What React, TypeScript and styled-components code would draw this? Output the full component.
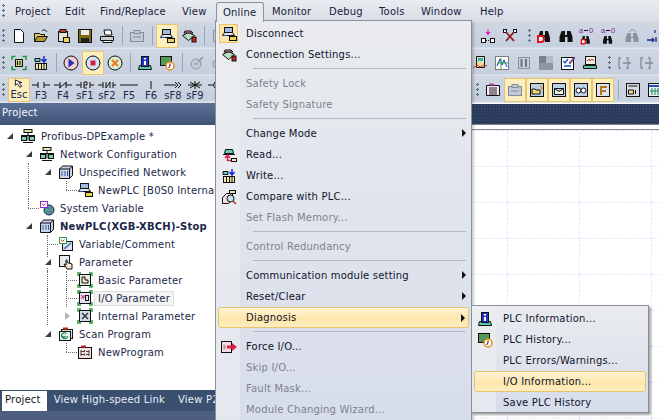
import React from "react";
import styled, { createGlobalStyle, css } from "styled-components";

const GlobalStyle = createGlobalStyle`
  html, body { margin: 0; padding: 0; width: 659px; height: 420px; overflow: hidden; background: #fff; }
  * { box-sizing: border-box; }
  body { font-family: "DejaVu Sans", Verdana, sans-serif; font-size: 10px; letter-spacing: 0.2px; color: #1a1a38; }
`;

const Window = styled.div`
  position: relative;
  width: 659px;
  height: 420px;
  overflow: hidden;
  display: flex;
  flex-direction: column;
`;

/* ---------- menu bar ---------- */
const MenuBar = styled.div`
  height: 22px;
  flex: none;
  display: flex;
  align-items: center;
  padding-left: 2px;
  background: linear-gradient(#e9ecf1, #d7dce5);
`;

const Grip = styled.i`
  flex: none;
  width: 3px;
  height: 14px;
  margin-right: 3px;
  background: radial-gradient(circle at 1.5px 1.5px, #5d6f88 1.3px, transparent 1.4px) 0 0 / 3px 5px;
`;

const InnerGrip = styled(Grip)`
  margin: 0 2px 0 7px;
`;

const MenuLabel = styled.span<{ $w: number }>`
  width: ${(p) => p.$w}px;
  flex: none;
  padding-left: 7px;
  color: #1b1b3c;
`;

const OpenMenuTab = styled.div`
  position: absolute;
  z-index: 5;
  left: 216px;
  top: 2px;
  width: 48px;
  height: 20px;
  padding: 4px 0 0 6px;
  color: #10183a;
  background: #e9ecef;
  border: 1px solid #8d939d;
  border-bottom: none;
  border-radius: 3px 3px 0 0;
`;

/* ---------- toolbars ---------- */
const ToolRow = styled.div`
  height: 27px;
  flex: none;
  display: flex;
  align-items: center;
  padding-left: 2px;
  background: linear-gradient(#d0d7e3, #c6cfde 90%, #e6eaf0);
`;

const ToolGroup = styled.div`
  display: flex;
  align-items: center;
`;

const RightGroup = styled(ToolGroup)<{ $w: number }>`
  position: absolute;
  left: ${(p) => p.$w}px;
  height: 27px;
`;

const ToolBtn = styled.div<{ $on?: boolean }>`
  width: 22px;
  height: 24px;
  flex: none;
  display: flex;
  align-items: center;
  justify-content: center;
  ${(p) =>
    p.$on &&
    css`
      background: #fdeec0;
      border: 1px solid #eac56f;
    `}
`;

const Sep = styled.i`
  flex: none;
  width: 1px;
  height: 19px;
  margin: 0 3.5px;
  background: #9aa6b8;
`;

const KeyBtn = styled.div<{ $on?: boolean }>`
  width: 22px;
  height: 24px;
  flex: none;
  display: flex;
  flex-direction: column;
  align-items: center;
  justify-content: flex-end;
  font-size: 10px;
  line-height: 10px;
  letter-spacing: 0;
  padding-bottom: 1px;
  color: #1c2a4c;
  ${(p) =>
    p.$on &&
    css`
      background: #fdeec0;
      border: 1px solid #eac56f;
    `}
  svg { display: block; margin-bottom: 1px; }
`;

/* ---------- body ---------- */
const Body = styled.div`
  flex: 1;
  display: flex;
  min-height: 0;
`;

const LeftPanel = styled.div`
  width: 215px;
  flex: none;
  display: flex;
  flex-direction: column;
`;

const PanelTitle = styled.div`
  height: 22px;
  flex: none;
  padding: 4px 0 0 2px;
  color: #f2f5fa;
  background: linear-gradient(#5b7097, #3f5375);
`;

const Tree = styled.div`
  flex: 1;
  padding-top: 2px;
  background: #fff;
  overflow: hidden;
`;

const TreeRow = styled.div<{ $depth: number }>`
  position: relative;
  height: 18px;
  display: flex;
  align-items: center;
  white-space: nowrap;
  padding-left: ${(p) => 5 + p.$depth * 19}px;
`;

const Expander = styled.span<{ $open?: boolean }>`
  position: relative;
  z-index: 1;
  width: 10px;
  height: 10px;
  flex: none;
  margin-right: 5px;
  background: #fff;
  ${(p) =>
    p.$open
      ? css`
          &::after {
            content: "";
            position: absolute;
            left: 2px;
            top: 2px;
            border-style: solid;
            border-width: 0 0 6px 6px;
            border-color: transparent transparent #3e3e3e transparent;
          }
        `
      : css`
          &::after {
            content: "";
            position: absolute;
            left: 3px;
            top: 1px;
            border-style: solid;
            border-width: 4px 0 4px 5px;
            border-color: transparent transparent transparent #b4b4b4;
          }
        `}
`;

const NoExpander = styled.span`
  width: 15px;
  flex: none;
`;

const Rail = styled.i<{ $x: number; $half?: boolean }>`
  position: absolute;
  left: ${(p) => p.$x}px;
  top: 0;
  height: ${(p) => (p.$half ? "9px" : "18px")};
  border-left: 1px dotted #6b6b6b;
`;

const Elbow = styled.i<{ $x: number; $w: number }>`
  position: absolute;
  left: ${(p) => p.$x}px;
  top: 9px;
  width: ${(p) => p.$w}px;
  border-top: 1px dotted #6b6b6b;
`;

const TreeIcon = styled.span`
  position: relative;
  z-index: 1;
  width: 17px;
  height: 16px;
  flex: none;
  background: #fff;
  svg { display: block; }
`;

const TreeLabel = styled.span<{ $bold?: boolean; $picked?: boolean }>`
  margin-left: 3px;
  padding: 1px 3px 1px 1px;
  color: #1a2748;
  font-weight: ${(p) => (p.$bold ? 700 : 400)};
  ${(p) =>
    p.$picked &&
    css`
      margin-left: 0;
      padding-left: 3px;
      background: #f3f4f3;
      border: 1px solid #dcdfdc;
    `}
`;

const TabStrip = styled.div`
  height: 21px;
  flex: none;
  display: flex;
  align-items: flex-end;
  overflow: hidden;
  white-space: nowrap;
  background: #3b4f71;
`;

const TabItem = styled.div<{ $on?: boolean }>`
  height: 20px;
  flex: none;
  padding: 3px 6px 0 3px;
  color: ${(p) => (p.$on ? "#111" : "#e8edf5")};
  background: ${(p) => (p.$on ? "#fff" : "transparent")};
  margin-left: ${(p) => (p.$on ? "2px" : "0")};
  & + & { padding-left: 7px; }
`;

const StatusFoot = styled.div`
  height: 9px;
  flex: none;
  background: #4d5e7e;
`;

const Editor = styled.div`
  flex: 1;
  display: flex;
  flex-direction: column;
  min-width: 0;
  border-left: 1px solid #9aa3b0;
`;

const EditorHead = styled.div`
  height: 21px;
  flex: none;
  margin-top: 1px;
  border-bottom: 1px solid #7d8087;
  background:
    radial-gradient(circle, #3c4f72 0.7px, transparent 0.8px) 0 0 / 3px 3px,
    #2a3b5b;
`;

const Rule = styled.div`
  height: 5px;
  flex: none;
  background: #fff;
  border-bottom: 1px solid #85888e;
`;

const Canvas = styled.div`
  flex: 1;
  min-height: 0;
  overflow: hidden;
  display: grid;
  grid-template-columns: 4px repeat(7, 72px);
  grid-auto-rows: 36px;
  background: #fff;
  border-top: 1px dashed #e8e4fb;
`;

const GridCell = styled.div`
  border-right: 1px dashed #e8e4fb;
  border-bottom: 1px dashed #e8e4fb;
`;

/* ---------- pull-down menus ---------- */
const menuFace = css`
  position: absolute;
  background: linear-gradient(#e9ebee, #d6dcea);
  border: 1px solid #8a8f98;
`;

const Dropdown = styled.div`
  ${menuFace}
  z-index: 4;
  left: 215px;
  top: 20px;
  width: 257px;
  height: 420px;
  padding: 2px 2px 0;
  box-shadow: 2px 2px 2px rgba(60, 60, 60, 0.25);
`;

const SubMenu = styled.div`
  ${menuFace}
  z-index: 6;
  left: 471px;
  top: 305px;
  width: 178px;
  height: 108px;
  padding: 2px 2px 0;
  box-shadow: 2px 2px 2px rgba(60, 60, 60, 0.45);
`;

const Gutter = styled.i<{ $w: number }>`
  position: absolute;
  left: 0;
  top: 0;
  bottom: 0;
  width: ${(p) => p.$w}px;
  background: linear-gradient(#eceef0, #e3e7ee);
`;

const Item = styled.div<{ $off?: boolean; $hot?: boolean; $text: number }>`
  position: relative;
  height: 21px;
  display: flex;
  align-items: center;
  padding-left: ${(p) => p.$text}px;
  white-space: nowrap;
  color: ${(p) => (p.$off ? "#7d8290" : "#10142e")};
  ${(p) =>
    p.$hot &&
    css`
      background: linear-gradient(#fdf3d6, #fde6a8 60%, #fdeec3);
      border: 1px solid #e8c36c;
      border-radius: 3px;
      padding-left: ${p.$text - 1}px;
    `}
`;

const ItemIcon = styled.span<{ $on?: boolean }>`
  position: absolute;
  left: 1px;
  top: 1px;
  width: 19px;
  height: 19px;
  display: flex;
  align-items: center;
  justify-content: center;
  ${(p) =>
    p.$on &&
    css`
      background: #fde6a8;
      border: 1px solid #e8c36c;
    `}
`;

const Arrow = styled.i`
  position: absolute;
  right: 3px;
  top: 6px;
  border-style: solid;
  border-width: 4px 0 4px 4px;
  border-color: transparent transparent transparent #111;
`;

const MenuSep = styled.div`
  height: 8px;
  margin-left: 35px;
  margin-right: 3px;
  padding-top: 3px;
  &::after {
    content: "";
    display: block;
    height: 1px;
    background: #b4b8c4;
  }
`;

/* ---------- icon drawings ---------- */
type IconName =
  | "newDoc" | "open" | "lockDoc" | "save" | "print" | "clip" | "plc" | "link"
  | "module" | "write" | "run" | "stop" | "pause" | "info" | "clock" | "probe"
  | "net" | "box" | "sysVar" | "varDoc" | "hand" | "basic" | "ioParam" | "inner"
  | "scan" | "prog" | "read" | "compare" | "force" | "chart" | "graph" | "bars"
  | "shade" | "check" | "monitor" | "bracket" | "findD" | "find" | "findRe"
  | "note" | "folderStar" | "mail" | "glasses" | "formF" | "form" | "table"
  | "pickNodes" | "crossNodes" | "step";

const Frame = (p: { fill?: string }) => (
  <rect x="2.5" y="2.5" width="11" height="11" fill={p.fill ?? "#dfe6ee"} stroke="#111" />
);

const Corners = () => (
  <path d="M1 4V1h3M12 1h3v3M15 12v3h-3M4 15H1v-3" fill="none" stroke="#2a9a3c" strokeWidth="1.4" />
);

const shapes: Record<IconName, React.ReactNode> = {
  newDoc: <path d="M3.5 1.5h6l3 3v10h-9z" fill="#fff" stroke="#111" />,
  open: (
    <>
      <path d="M1.5 5.5h5l1 1h4v7h-10z" fill="#e8c95a" stroke="#111" />
      <path d="M1.5 13.5l3-5h10l-3 5z" fill="#b39a2e" stroke="#111" />
      <path d="M9 3c2-2 4-1 5 1" fill="none" stroke="#111" />
    </>
  ),
  lockDoc: (
    <>
      <rect x="3.5" y="3.5" width="9" height="10" fill="#e6e2d8" stroke="#111" />
      <rect x="5" y="1.5" width="6" height="3" fill="#c33" stroke="#111" />
      <rect x="8.5" y="9.5" width="6" height="5" fill="#e8d25a" stroke="#111" />
    </>
  ),
  save: (
    <>
      <rect x="1.5" y="1.5" width="13" height="13" fill="#7a6a12" stroke="#111" />
      <rect x="4" y="2" width="8" height="5" fill="#eee" />
      <rect x="4" y="10" width="8" height="4" fill="#222" />
    </>
  ),
  print: (
    <>
      <path d="M5 2h7l1 5H6z" fill="#fff" stroke="#111" />
      <path d="M1.5 8.5h13v4h-13z" fill="#ccc" stroke="#111" />
      <path d="M4 12.5h9v2H4z" fill="#fff" stroke="#111" />
    </>
  ),
  clip: (
    <>
      <rect x="1.5" y="4.5" width="13" height="9" fill="#c3cad5" stroke="#838b98" />
      <rect x="5" y="2.5" width="6" height="3" fill="#c3cad5" stroke="#838b98" />
      <path d="M4 9h8" stroke="#838b98" />
    </>
  ),
  plc: (
    <>
      <rect x="3.5" y="1.5" width="8" height="5" fill="#9fb9e4" stroke="#111" />
      <path d="M1.5 9.5l2-3h8l2 3z" fill="#dfe6f2" stroke="#111" />
      <path d="M6 9.5h-4.5M9 11h6" stroke="#2a4fc0" />
      <rect x="8.5" y="10.5" width="7" height="4" fill="#e8d25a" stroke="#111" />
    </>
  ),
  link: (
    <>
      <path d="M1.5 7.5l6-3 6 3-6 5z" fill="#b9e0c5" stroke="#111" />
      <path d="M4 3h6l2 2H3z" fill="#e08aa0" stroke="#111" />
      <rect x="11" y="9" width="4" height="5" fill="#c22" stroke="#111" />
    </>
  ),
  module: (
    <>
      <rect x="4.5" y="4.5" width="7" height="7" fill="#c7d27a" stroke="#111" />
      <path d="M6.5 6v4M9 6v4" stroke="#111" />
      <path d="M1 5V1.500h3.500M11.500 1.500H15V5M15 11v3.500h-3.500M4.500 14.500H1V11" fill="none" stroke="#1c9a3c" strokeWidth="1.500" />
    </>
  ),
  write: (
    <>
      <path d="M2 3.500h5v3H2z" fill="#62d0c0" stroke="#111" />
      <path d="M11 1v5M8.500 4l2.500 3 2.500-3" fill="none" stroke="#1a2fd0" strokeWidth="1.500" />
      <rect x="2.500" y="8.500" width="11" height="6" fill="#f0e8b0" stroke="#111" />
      <path d="M5.500 9v5M8.500 9v5M11 9v5" stroke="#111" />
    </>
  ),
  run: (
    <>
      <circle cx="8" cy="8" r="7" fill="#f4cfd2" stroke="#111" />
      <path d="M5.500 3.500l6 4.500-6 4.500z" fill="#2430c4" />
    </>
  ),
  stop: (
    <>
      <circle cx="8" cy="8" r="7" fill="#cfe4f6" stroke="#111" />
      <rect x="5.500" y="5.500" width="5" height="5" fill="#d41e3a" />
    </>
  ),
  pause: (
    <>
      <circle cx="8" cy="8" r="7" fill="#d7eed2" stroke="#111" />
      <path d="M5 5l6 6M11 5l-6 6" stroke="#ee7a1e" strokeWidth="2" />
    </>
  ),
  info: (
    <>
      <path d="M1.500 14.500l1-4h11l1 4z" fill="#5bc7a8" stroke="#111" />
      <rect x="4.500" y="1.500" width="7" height="10" fill="#2436c8" stroke="#111" />
      <path d="M7 3h2v1.500H7zM7 6h2v4H7z" fill="#fff" />
    </>
  ),
  clock: (
    <>
      <rect x="1.500" y="1.500" width="11" height="9" fill="#4f9a58" stroke="#111" />
      <circle cx="11" cy="11" r="4" fill="#fff" stroke="#ee8a1e" strokeWidth="1.500" />
      <path d="M11 8.500V11l-1.500 2" stroke="#111" fill="none" />
    </>
  ),
  probe: (
    <>
      <circle cx="7" cy="9" r="5" fill="#c6cdd8" stroke="#8a929e" />
      <path d="M9 7l5-5M5.500 9h3" stroke="#8a929e" strokeWidth="1.500" />
    </>
  ),
  net: (
    <>
      <rect x="4" y="1.500" width="8" height="3" fill="#e8e2a8" stroke="#111" />
      <path d="M1 7.500h14M8 4.500v8" stroke="#111" />
      <rect x="1.500" y="8.500" width="5" height="4" fill="#7fd4a8" stroke="#111" />
      <rect x="9.500" y="8.500" width="5" height="4" fill="#7fd4a8" stroke="#111" />
      <path d="M3 14.500h10" stroke="#111" />
    </>
  ),
  box: (
    <>
      <path d="M1.500 5l3-3h10v9.500l-3 3h-10z" fill="#c6d4ec" stroke="#111" />
      <path d="M1.500 5h10v9.500M11.500 5l3-3" fill="none" stroke="#111" />
      <path d="M4 7v5M7 7v5M9.500 7v5" stroke="#3a5a9a" />
    </>
  ),
  sysVar: (
    <>
      <circle cx="10" cy="10" r="5" fill="#3da5a0" stroke="#224" />
      <path d="M7 8h6M8 12h5" stroke="#c43a78" />
      <rect x="1.500" y="1.500" width="7" height="6" fill="#fff" stroke="#8a30d0" />
      <path d="M3 3.500l1.500 2 2-2" fill="none" stroke="#d02a6a" />
    </>
  ),
  varDoc: (
    <>
      <rect x="4.500" y="5.500" width="10" height="9" fill="#dfe6f2" stroke="#111" />
      <path d="M6 13l7-6" stroke="#6a86b8" strokeWidth="2" />
      <rect x="1.500" y="1.500" width="7" height="6" fill="#fff" stroke="#2aa04a" />
      <path d="M3 3.500l1.500 2 2-2" fill="none" stroke="#d02a3a" />
    </>
  ),
  hand: (
    <>
      <rect x="1.500" y="1.500" width="10" height="11" fill="#e6ebf2" stroke="#111" />
      <path d="M8 6v5l-2-1 3 5h5v-5l-3-1-2-.5V6z" fill="#f8e2c8" stroke="#111" />
    </>
  ),
  basic: (
    <>
      <Corners />
      <Frame fill="#e8edd8" />
      <path d="M5 5v6h6V8H8V5z" fill="none" stroke="#111" />
    </>
  ),
  ioParam: (
    <>
      <Corners />
      <Frame fill="#e6e2f0" />
      <path d="M4 5l3 3M7 5v3H4" fill="none" stroke="#d41e5a" />
      <rect x="8.500" y="5.500" width="3" height="5" fill="none" stroke="#111" />
    </>
  ),
  inner: (
    <>
      <Corners />
      <Frame fill="#cfdcea" />
      <path d="M5 5l6 6M11 5l-6 6" stroke="#334" strokeWidth="1.500" />
    </>
  ),
  scan: (
    <>
      <rect x="3.500" y="3.500" width="11" height="9" fill="#d4e8dc" stroke="#111" />
      <rect x="1.500" y="5.500" width="11" height="9" fill="#e8f2ec" stroke="#111" />
      <rect x="5" y="1.500" width="5" height="2" fill="#c22" />
      <path d="M9.500 10a3 3 0 1 1-1-2.500M4.500 10l1.500 1.500L7.500 10" fill="none" stroke="#1b8a4a" strokeWidth="1.200" />
    </>
  ),
  prog: (
    <>
      <rect x="1.500" y="3.500" width="13" height="11" fill="#f7e2e2" stroke="#111" />
      <rect x="4" y="1.500" width="5" height="2" fill="#c22" />
      <path d="M4 6v6M12 6v6M4 7.500h3M9 7.500h3M4 10.500h3M9 10.500h3M7.500 6v2M7.500 9.500v2" stroke="#444" />
    </>
  ),
  read: (
    <>
      <path d="M4.500 2.500h7l1 4h-9z" fill="#62d0b8" stroke="#111" />
      <path d="M2 7.500h12" stroke="#111" />
      <path d="M6.500 14V9M4 11l2.500-3L9 11M6.500 13.500h4" fill="none" stroke="#e01e5a" strokeWidth="1.500" />
      <rect x="10.500" y="11.500" width="5" height="3" fill="#f0e8c0" stroke="#111" />
    </>
  ),
  compare: (
    <>
      <path d="M1.500 8.500l4-4h6v6l-4 4h-6z" fill="#f4d8dc" stroke="#111" />
      <rect x="8.500" y="1.500" width="6" height="3" fill="#e8e2a8" stroke="#111" />
      <circle cx="9.500" cy="9.500" r="3.500" fill="#bfe4f4" stroke="#111" />
      <path d="M12 12l3 3" stroke="#c22" strokeWidth="1.500" />
    </>
  ),
  force: (
    <>
      <rect x="0.500" y="2.500" width="10" height="11" fill="#f7dce2" stroke="#111" />
      <path d="M3 5v6M3 7h2M3 9h2" stroke="#a88" />
      <path d="M6 6.500h5V4l5 4-5 4V9.500H6z" fill="#e01e4a" />
    </>
  ),
  chart: (
    <>
      <path d="M4.500 1.500h8v11h-8z" fill="#e8e0a0" stroke="#111" />
      <path d="M1 13l4-3 3 2 4-2 3 1" fill="none" stroke="#d0301e" />
      <rect x="6" y="3" width="5" height="3" fill="#2ab0c8" />
    </>
  ),
  graph: (
    <>
      <rect x="1.500" y="1.500" width="13" height="13" fill="#fff" stroke="#111" strokeDasharray="1 1" />
      <path d="M3 11l3-7 2 6 2-5 3 7" fill="none" stroke="#1a2fd0" />
      <path d="M3 8h11M7 3v11" stroke="#2ab04a" />
    </>
  ),
  bars: (
    <>
      <rect x="2.500" y="2.500" width="11" height="11" fill="#c8cfda" stroke="#8a929e" />
      <path d="M5.500 4v8M10 4v8" stroke="#6d7583" strokeWidth="2" />
    </>
  ),
  shade: (
    <>
      <rect x="1" y="1" width="7" height="7" fill="#79818d" />
      <rect x="8" y="1" width="7" height="7" fill="#b5bcc8" />
      <rect x="1" y="8" width="14" height="7" fill="#8e96a3" />
    </>
  ),
  check: (
    <>
      <rect x="1.500" y="2.500" width="12" height="12" fill="#fff" stroke="#111" />
      <path d="M3.500 6l1.500 2 3-4M4 11h7" fill="none" stroke="#1a50c0" strokeWidth="1.300" />
      <path d="M9 8l5-6 1 1-5 6z" fill="#b040b0" stroke="#222" strokeWidth="0.500" />
    </>
  ),
  monitor: (
    <>
      <rect x="3.500" y="1.500" width="10" height="8" fill="#e4f2e0" stroke="#111" />
      <path d="M5 6l2-2 1 2 2-2 2 2" fill="none" stroke="#d02a3a" />
      <path d="M1.500 10.500h13v3h-13z" fill="#5bc79a" stroke="#111" />
    </>
  ),
  bracket: <path d="M5 3H3v10h2M10 3h2v10h-2M7 8h8" fill="none" stroke="#838b98" strokeWidth="1.300" />,
  findD: (
    <>
      <path d="M2 10l2-7h3v4h2V3h3l2 7v4h-5V9H7v5H2z" fill="#111" />
      <path d="M1 7h4a4 4 0 0 1 0 8H1z" fill="#e01020" />
      <path d="M3 9h2a2 2 0 0 1 0 4H3z" fill="#fff" />
    </>
  ),
  find: <path d="M1.500 9l2-6h3.500v4h2V3h3.500l2 6v5h-5V9H7v5H1.500z" fill="#111" />,
  findRe: (
    <>
      <path d="M1.500 10l2-5h3.500v4h2V5h3.500l2 5v4h-5V10H7v4H1.500z" fill="#8a929e" />
      <path d="M5 4a4 4 0 0 1 7 0" fill="none" stroke="#8a929e" />
    </>
  ),
  note: (
    <>
      <path d="M1.500 3.500h13v10h-13z" fill="#fde6f4" stroke="#111" />
      <rect x="4" y="1.500" width="5" height="2" fill="#b04a9a" />
      <path d="M4 6h8M4 8h8M4 10h8M4 12h8" stroke="#222" />
    </>
  ),
  folderStar: (
    <>
      <rect x="1.500" y="1.500" width="13" height="13" fill="#bcd2e6" stroke="#111" />
      <path d="M3 7h3l1 1h4v4H3z" fill="#f4dc7a" stroke="#111" />
      <path d="M11 3l1 2 2 1-2 1-1 2" stroke="#ee7a1e" fill="none" />
    </>
  ),
  mail: (
    <>
      <rect x="1.500" y="1.500" width="13" height="13" fill="#bcd2e6" stroke="#111" />
      <path d="M3.500 6.500h9v6h-9zM3.500 6.500l4.500 3 4.500-3" fill="#f6f0d8" stroke="#111" />
    </>
  ),
  glasses: (
    <>
      <rect x="1.500" y="1.500" width="13" height="13" fill="#bcd2e6" stroke="#111" />
      <circle cx="5.500" cy="8.500" r="2.500" fill="#fff" stroke="#111" />
      <circle cx="10.500" cy="8.500" r="2.500" fill="#fff" stroke="#111" />
    </>
  ),
  formF: (
    <>
      <rect x="1.500" y="1.500" width="13" height="13" fill="#d8e4f0" stroke="#111" />
      <path d="M5 4h7v2H7v2h4v2H7v3H5z" fill="#b8741a" />
    </>
  ),
  form: (
    <>
      <rect x="1.500" y="1.500" width="13" height="13" fill="#d8dde4" stroke="#111" />
      <path d="M3.500 4h9M3.500 8h5v4h-5zM10.500 8v4" stroke="#111" fill="#f2d890" />
    </>
  ),
  table: (
    <>
      <rect x="1.500" y="1.500" width="13" height="13" fill="#e8eef6" stroke="#111" />
      <path d="M2 4h12" stroke="#2a50c0" strokeWidth="2" />
      <path d="M5 6v7M8 6v7M11 6v7M3 9h10" stroke="#1a8a4a" />
    </>
  ),
  pickNodes: (
    <>
      <rect x="1.500" y="10.500" width="4" height="4" fill="#fff" stroke="#111" />
      <rect x="10.500" y="10.500" width="4" height="4" fill="#fff" stroke="#111" />
      <path d="M8 1v3" stroke="#d01ec0" />
      <path d="M5.500 4h5L8 7.500z" fill="#e01ed0" />
      <path d="M6 12.500h3" stroke="#111" strokeDasharray="1 1" />
    </>
  ),
  crossNodes: (
    <>
      <rect x="1.500" y="1.500" width="3" height="3" fill="#fff" stroke="#111" />
      <rect x="11.500" y="1.500" width="3" height="3" fill="#fff" stroke="#111" />
      <path d="M4 4l8 9M12 4l-8 9" stroke="#8a1a1a" strokeWidth="1.800" />
    </>
  ),
  step: <path d="M9 2v3M1 12h7M6 10l2 2-2 2M10 9v5" fill="none" stroke="#1a2a8a" strokeWidth="1.300" />,
};

const Glyph = ({ name }: { name: IconName }) => (
  <svg width="16" height="16" viewBox="0 0 16 16">
    {shapes[name]}
  </svg>
);

/* purple a→0 marker sitting over the binocular buttons */
const ReplaceGlyph = ({ name }: { name: IconName }) => (
  <svg width="18" height="18" viewBox="0 0 18 18">
    <text x="0" y="6" fontSize="7.500" fontFamily="Liberation Sans" fill="#8a1a9a">a</text>
    <path d="M5 3.500h4" stroke="#111" />
    <text x="10" y="6" fontSize="7.500" fontFamily="Liberation Sans" fill="#8a1a9a">0</text>
    <g transform="translate(1 7) scale(0.7)">{shapes[name]}</g>
  </svg>
);

const contactPaths: Record<string, string> = {
  F3: "M0 5h6M6 2v6M12 2v6M12 5h6",
  F4: "M0 5h6M6 2v6M12 2v6M12 5h6M5 8l8-6",
  sF1: "M0 5h5M5 2v6M8 2v6h3M8 2h3v3H8M14 2v6M14 5h4",
  sF2: "M0 5h5M5 2v6M8 2v6l4-6v6M15 2v6M15 5h3",
  F5: "M0 5h18",
  F6: "M9 1v8",
  sF8: "M0 5h12M11 2l3 3-3 3M14 2l3 3-3 3",
  sF9: "M9 1v8M4 2l10 6M14 2L4 8M2 5h14",
  F: "M8 1C5 3 5 7 8 9M0 5h5",
};

const KeyGlyph = ({ d }: { d: string }) => (
  <svg width="18" height="10" viewBox="0 0 18 10">
    <path d={d} fill="none" stroke="#111" />
  </svg>
);

/* ---------- data ---------- */
type Tool = IconName | "|" | `*${IconName}`;

const row1Left: Tool[] = ["newDoc", "open", "lockDoc", "save", "print", "|", "clip", "|", "*plc", "link", "|", "bars"];
const row2Left: Tool[] = ["module", "write", "|", "run", "*stop", "pause", "|", "info", "clock", "|", "probe", "probe"];
const row2Right: Tool[] = ["chart", "graph", "bars", "shade", "check", "monitor"];
const row3Right: Tool[] = ["note", "*clip", "*folderStar", "*mail", "*glasses", "*formF", "|", "form", "table"];

const keys = [
  { id: "F3", label: "F3" },
  { id: "F4", label: "F4" },
  { id: "sF1", label: "sF1" },
  { id: "sF2", label: "sF2" },
  { id: "F5", label: "F5" },
  { id: "F6", label: "F6" },
  { id: "sF8", label: "sF8" },
  { id: "sF9", label: "sF9" },
  { id: "F", label: "F" },
];

type Node = {
  depth: number;
  label: string;
  icon: IconName;
  open?: boolean;
  leaf?: boolean;
  bold?: boolean;
  picked?: boolean;
  rails?: number[];
  half?: number;
  elbow?: [number, number];
};

const nodes: Node[] = [
  { depth: 0, label: "Profibus-DPExample *", icon: "net", open: true },
  { depth: 1, label: "Network Configuration", icon: "net", open: true },
  { depth: 2, label: "Unspecified Network", icon: "box", open: true, rails: [28] },
  { depth: 3, label: "NewPLC [B0S0 Internal", icon: "plc", leaf: true, rails: [28], half: 66, elbow: [66, 11] },
  { depth: 1, label: "System Variable", icon: "sysVar", leaf: true, half: 28, elbow: [28, 11] },
  { depth: 1, label: "NewPLC(XGB-XBCH)-Stop", icon: "box", open: true, bold: true },
  { depth: 2, label: "Variable/Comment", icon: "varDoc", leaf: true, rails: [47], elbow: [47, 11] },
  { depth: 2, label: "Parameter", icon: "hand", open: true, rails: [47] },
  { depth: 3, label: "Basic Parameter", icon: "basic", leaf: true, rails: [47, 66], elbow: [66, 11] },
  { depth: 3, label: "I/O Parameter", icon: "ioParam", leaf: true, picked: true, rails: [47, 66], elbow: [66, 11] },
  { depth: 3, label: "Internal Parameter", icon: "inner", rails: [47] },
  { depth: 2, label: "Scan Program", icon: "scan", open: true },
  { depth: 3, label: "NewProgram", icon: "prog", leaf: true, half: 66, elbow: [66, 11] },
];

type Entry = { label?: string; icon?: IconName; on?: boolean; off?: boolean; sub?: boolean; hot?: boolean };

const onlineMenu: Entry[] = [
  { label: "Disconnect", icon: "plc", on: true },
  { label: "Connection Settings...", icon: "link" },
  {},
  { label: "Safety Lock", off: true },
  { label: "Safety Signature", off: true },
  {},
  { label: "Change Mode", sub: true },
  { label: "Read...", icon: "read" },
  { label: "Write...", icon: "write" },
  { label: "Compare with PLC...", icon: "compare" },
  { label: "Set Flash Memory...", off: true },
  {},
  { label: "Control Redundancy", off: true },
  {},
  { label: "Communication module setting", sub: true },
  { label: "Reset/Clear", sub: true },
  { label: "Diagnosis", sub: true, hot: true },
  {},
  { label: "Force I/O...", icon: "force" },
  { label: "Skip I/O...", off: true },
  { label: "Fault Mask...", off: true },
  { label: "Module Changing Wizard...", off: true },
];

const diagnosisMenu: Entry[] = [
  { label: "PLC Information...", icon: "info" },
  { label: "PLC History...", icon: "clock" },
  { label: "PLC Errors/Warnings..." },
  { label: "I/O Information...", hot: true },
  { label: "Save PLC History" },
];

const gridCells = Array.from({ length: 8 * 9 });

const Tools = ({ items }: { items: Tool[] }) => (
  <>
    {items.map((t, i) => {
      if (t === "|") return <Sep key={i} />;
      const on = t.startsWith("*");
      return (
        <ToolBtn key={i} $on={on}>
          <Glyph name={(on ? t.slice(1) : t) as IconName} />
        </ToolBtn>
      );
    })}
  </>
);

const MenuEntries = ({ items, text }: { items: Entry[]; text: number }) => (
  <>
    {items.map((e, i) =>
      e.label ? (
        <Item key={i} $off={e.off} $hot={e.hot} $text={text}>
          {e.icon && (
            <ItemIcon $on={e.on}>
              <Glyph name={e.icon} />
            </ItemIcon>
          )}
          {e.label}
          {e.sub && <Arrow />}
        </Item>
      ) : (
        <MenuSep key={i} />
      ),
    )}
  </>
);

export default function App() {
  return (
    <Window>
      <GlobalStyle />
      <MenuBar>
        <Grip />
        <MenuLabel $w={50}>Project</MenuLabel>
        <MenuLabel $w={35}>Edit</MenuLabel>
        <MenuLabel $w={82}>Find/Replace</MenuLabel>
        <MenuLabel $w={41}>View</MenuLabel>
        <MenuLabel $w={49} />
        <MenuLabel $w={57}>Monitor</MenuLabel>
        <MenuLabel $w={50}>Debug</MenuLabel>
        <MenuLabel $w={42}>Tools</MenuLabel>
        <MenuLabel $w={59}>Window</MenuLabel>
        <MenuLabel $w={40}>Help</MenuLabel>
      </MenuBar>
      <OpenMenuTab>Online</OpenMenuTab>

      <ToolRow>
        <Grip />
        <ToolGroup>
          <Tools items={row1Left} />
        </ToolGroup>
        <RightGroup $w={477}>
          <ToolBtn><Glyph name="pickNodes" /></ToolBtn>
          <ToolBtn><Glyph name="crossNodes" /></ToolBtn>
          <InnerGrip />
          <ToolBtn><Glyph name="findD" /></ToolBtn>
          <ToolBtn><Glyph name="find" /></ToolBtn>
          <ToolBtn><ReplaceGlyph name="findD" /></ToolBtn>
          <ToolBtn><ReplaceGlyph name="find" /></ToolBtn>
          <ToolBtn><Glyph name="findRe" /></ToolBtn>
          <ToolBtn><Glyph name="step" /></ToolBtn>
        </RightGroup>
      </ToolRow>

      <ToolRow>
        <Grip />
        <ToolGroup>
          <Tools items={row2Left} />
        </ToolGroup>
        <RightGroup $w={469}>
          <Tools items={row2Right} />
          <InnerGrip />
          <ToolBtn><Glyph name="bracket" /></ToolBtn>
          <ToolBtn><Glyph name="bracket" /></ToolBtn>
        </RightGroup>
      </ToolRow>

      <ToolRow>
        <Grip />
        <ToolGroup>
          <KeyBtn $on>
            <svg width="14" height="11" viewBox="0 0 14 11">
              <path d="M3 1v6l2-2 3 4 2-1-3-4h3z" fill="#fff" stroke="#111" />
            </svg>
            Esc
          </KeyBtn>
          {keys.map((k) => (
            <KeyBtn key={k.id}>
              <KeyGlyph d={contactPaths[k.id]} />
              {k.label}
            </KeyBtn>
          ))}
        </ToolGroup>
        <RightGroup $w={476}>
          <Grip />
          <Tools items={row3Right} />
        </RightGroup>
      </ToolRow>

      <Body>
        <LeftPanel>
          <PanelTitle>Project</PanelTitle>
          <Tree>
            {nodes.map((n) => (
              <TreeRow key={n.label} $depth={n.depth}>
                {n.rails?.map((x) => <Rail key={x} $x={x} />)}
                {n.half !== undefined && <Rail $x={n.half} $half />}
                {n.elbow && <Elbow $x={n.elbow[0]} $w={n.elbow[1]} />}
                {n.leaf ? <NoExpander /> : <Expander $open={n.open} />}
                <TreeIcon>
                  <Glyph name={n.icon} />
                </TreeIcon>
                <TreeLabel $bold={n.bold} $picked={n.picked}>{n.label}</TreeLabel>
              </TreeRow>
            ))}
          </Tree>
          <TabStrip>
            <TabItem $on>Project</TabItem>
            <TabItem>View High-speed Link</TabItem>
            <TabItem>View P2P</TabItem>
          </TabStrip>
          <StatusFoot />
        </LeftPanel>
        <Editor>
          <EditorHead />
          <Rule />
          <Canvas>
            {gridCells.map((_, i) => (
              <GridCell key={i} />
            ))}
          </Canvas>
        </Editor>
      </Body>

      <Dropdown>
        <Gutter $w={24} />
        <MenuEntries items={onlineMenu} text={28} />
      </Dropdown>
      <SubMenu>
        <Gutter $w={24} />
        <MenuEntries items={diagnosisMenu} text={29} />
      </SubMenu>
    </Window>
  );
}
